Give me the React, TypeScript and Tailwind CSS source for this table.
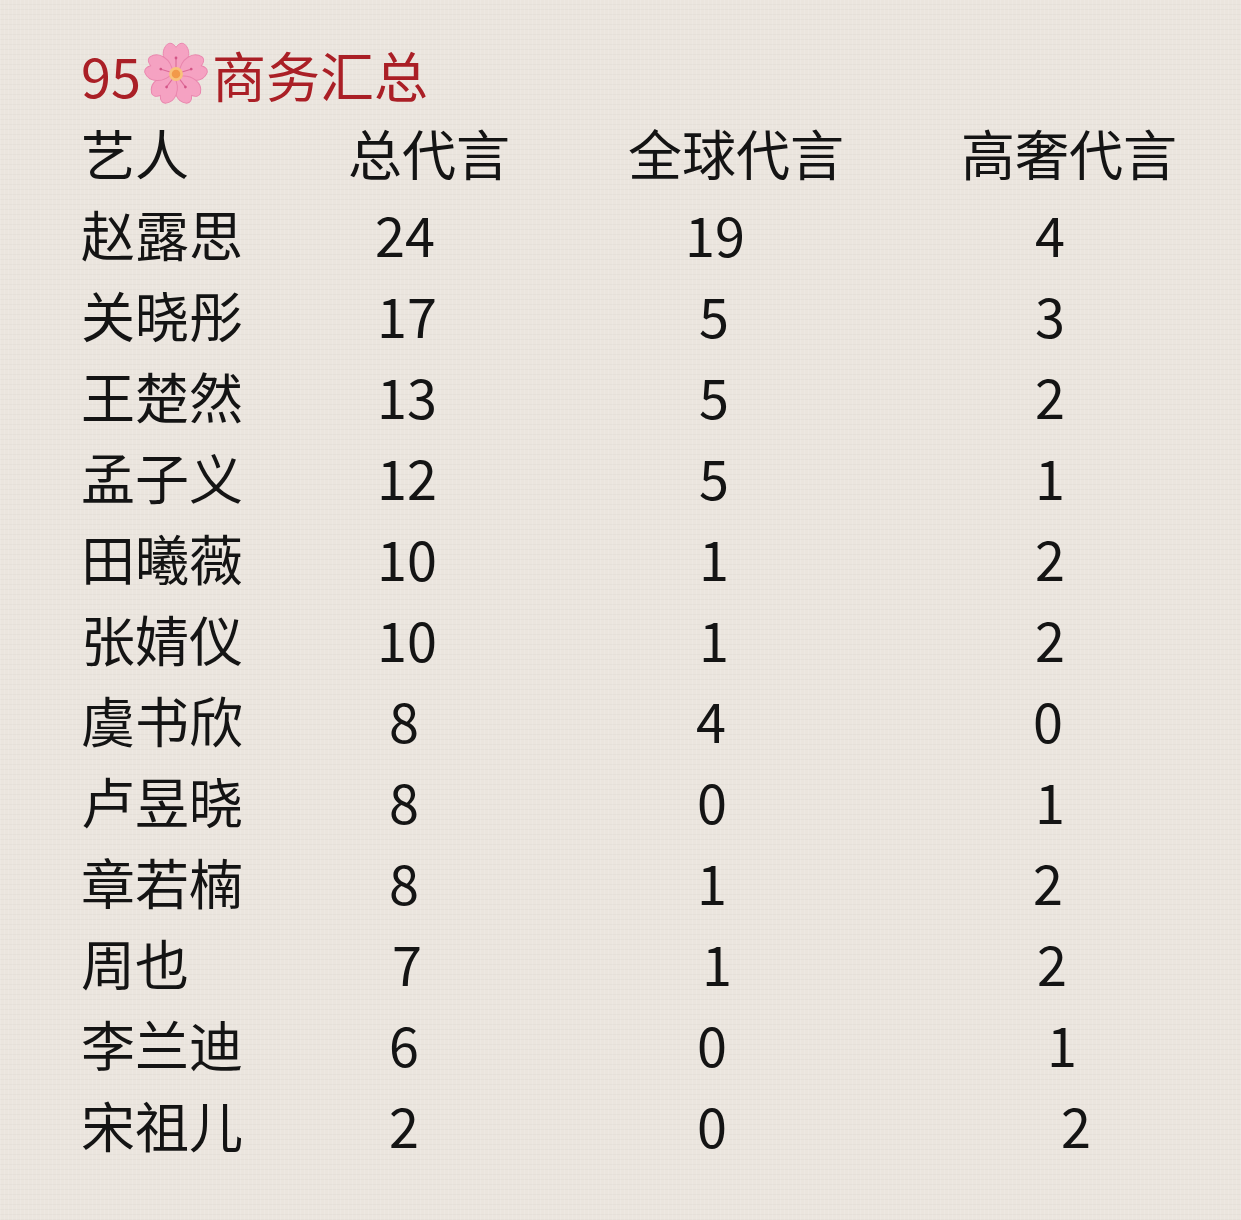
import React from "react";

// Each cell keeps its own left offset, like a note typed with spaces.
type Cell = { text: string; pad: string };
type Row = { name: string; cells: [Cell, Cell, Cell] };

const ROWS: Row[] = [
  { name: "赵露思", cells: [{ text: "24", pad: "pl-[35px]" }, { text: "19", pad: "pl-[65px]" }, { text: "4", pad: "pl-[85px]" }] },
  { name: "关晓彤", cells: [{ text: "17", pad: "pl-[37px]" }, { text: "5", pad: "pl-[79px]" }, { text: "3", pad: "pl-[85px]" }] },
  { name: "王楚然", cells: [{ text: "13", pad: "pl-[37px]" }, { text: "5", pad: "pl-[79px]" }, { text: "2", pad: "pl-[85px]" }] },
  { name: "孟子义", cells: [{ text: "12", pad: "pl-[37px]" }, { text: "5", pad: "pl-[79px]" }, { text: "1", pad: "pl-[85px]" }] },
  { name: "田曦薇", cells: [{ text: "10", pad: "pl-[37px]" }, { text: "1", pad: "pl-[79px]" }, { text: "2", pad: "pl-[85px]" }] },
  { name: "张婧仪", cells: [{ text: "10", pad: "pl-[37px]" }, { text: "1", pad: "pl-[79px]" }, { text: "2", pad: "pl-[85px]" }] },
  { name: "虞书欣", cells: [{ text: "8", pad: "pl-[49px]" }, { text: "4", pad: "pl-[76px]" }, { text: "0", pad: "pl-[83px]" }] },
  { name: "卢昱晓", cells: [{ text: "8", pad: "pl-[49px]" }, { text: "0", pad: "pl-[77px]" }, { text: "1", pad: "pl-[85px]" }] },
  { name: "章若楠", cells: [{ text: "8", pad: "pl-[49px]" }, { text: "1", pad: "pl-[77px]" }, { text: "2", pad: "pl-[83px]" }] },
  { name: "周也", cells: [{ text: "7", pad: "pl-[52px]" }, { text: "1", pad: "pl-[82px]" }, { text: "2", pad: "pl-[87px]" }] },
  { name: "李兰迪", cells: [{ text: "6", pad: "pl-[49px]" }, { text: "0", pad: "pl-[77px]" }, { text: "1", pad: "pl-[97px]" }] },
  { name: "宋祖儿", cells: [{ text: "2", pad: "pl-[49px]" }, { text: "0", pad: "pl-[77px]" }, { text: "2", pad: "pl-[111px]" }] },
];

const FONT =
  "font-['HarmonyOS_Sans','Noto_Sans_CJK_SC','Noto_Sans',sans-serif]";

function Blossom() {
  const petals = [0, 72, 144, 216, 288];
  return (
    <svg width="64" height="64" viewBox="0 0 60 60" className="ml-[3px] mr-[4px] shrink-0">
      <g transform="translate(30 30)">
        {petals.map((a) => (
          <g key={a} transform={`rotate(${a})`}>
            <path
              d="M0 -3 C -13 -9 -15 -22 -8 -28 C -5 -30 -2 -28 0 -25 C 2 -28 5 -30 8 -28 C 15 -22 13 -9 0 -3 Z"
              fill="#f5a2c2"
              stroke="#e985ad"
              strokeWidth="0.9"
            />
            <path d="M0 -5 L0 -14" stroke="#dc6a97" strokeWidth="1" />
            <circle cx="0" cy="-15" r="1.3" fill="#d45587" />
          </g>
        ))}
        <circle r="6.5" fill="#f8c27a" />
        <circle r="4" fill="#f29a4a" />
      </g>
    </svg>
  );
}

export default function App() {
  return (
    <div
      className={`h-[1220px] w-[1241px] overflow-hidden bg-[#ebe5de] bg-[repeating-linear-gradient(90deg,rgba(255,255,255,0.12)_0px,rgba(255,255,255,0.12)_1px,transparent_1px,transparent_4px),repeating-linear-gradient(0deg,rgba(0,0,0,0.025)_0px,rgba(0,0,0,0.025)_1px,transparent_1px,transparent_5px)] pl-[81px] pt-[31px] text-[54px] leading-[81px] text-[#141414] ${FONT}`}
    >
      <div className="flex h-[81px] items-center pt-[5px] text-[#aa1f26]">
        <span>95</span>
        <Blossom />
        <span>商务汇总</span>
      </div>

      <div className="grid h-[81px] grid-cols-[259px_280px_330px_1fr]">
        <div>艺人</div>
        <div className="pl-[8px]">总代言</div>
        <div className="pl-[8px]">全球代言</div>
        <div className="pl-[11px]">高奢代言</div>
      </div>

      {ROWS.map((r) => (
        <div key={r.name} className="grid h-[81px] grid-cols-[259px_280px_330px_1fr]">
          <div>{r.name}</div>
          {r.cells.map((c, i) => (
            <div key={i} className={c.pad}>
              {c.text}
            </div>
          ))}
        </div>
      ))}
    </div>
  );
}
